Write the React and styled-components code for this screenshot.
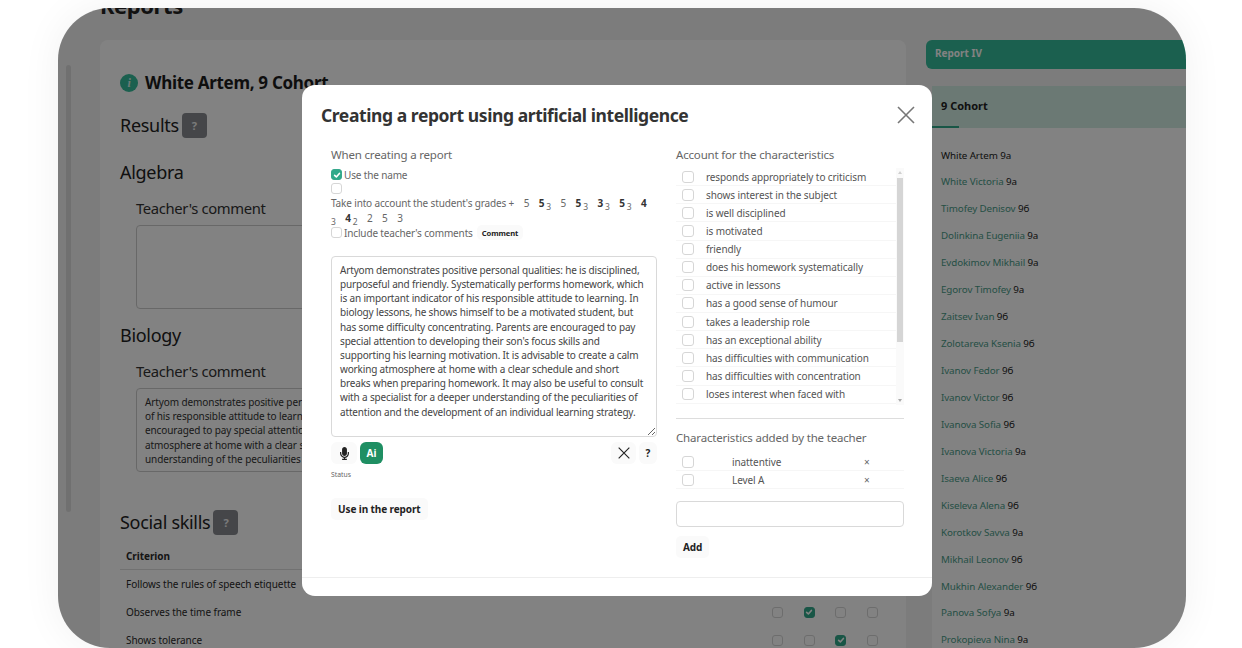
import React from "react";
import styled, { createGlobalStyle } from "styled-components";
import { FaMicrophone } from "react-icons/fa";

const GlobalStyle = createGlobalStyle`
  html, body {
    margin: 0;
    height: 648px;
    overflow: hidden;
    background: #fff;
    font-family: "Noto Sans", "Open Sans", sans-serif;
  }
  * { box-sizing: border-box; }
`;

const Screen = styled.div`
  width: 1242px;
  height: 648px;
  padding: 8px 56px 0 58px;
`;
const Frame = styled.div`
  position: relative;
  height: 640px;
  display: flex;
  overflow: hidden;
  border-radius: 52px;
  background: #f4f4f4;
  box-shadow: 0 0 40px rgba(0, 0, 0, 0.06);
`;
const Rail = styled.div`
  width: 17px;
  flex: none;
  padding: 57px 0 0 8px;
`;
const RailThumb = styled.div`
  width: 5px;
  height: 447px;
  border-radius: 3px;
  background: #dcdcdc;
`;
const Main = styled.main`
  width: 851px;
  flex: none;
  margin-top: -14px;
  padding-left: 25px;
`;
const PageTitle = styled.h1`
  margin: 0 0 23px;
  font-size: 22px;
  line-height: 23px;
  font-weight: 700;
  letter-spacing: -0.4px;
  color: #222;
`;
const Card = styled.section`
  width: 806px;
  height: 640px;
  padding: 30px 20px 0;
  background: #fff;
  border-radius: 8px;
`;
const NameRow = styled.div`
  display: flex;
  align-items: center;
  gap: 7px;
  font-size: 17px;
  line-height: 26px;
  font-weight: 700;
  letter-spacing: -0.3px;
  color: #1c1c1c;
`;
const InfoDot = styled.span`
  width: 18px;
  height: 18px;
  border-radius: 50%;
  background: #36bc9b;
  color: #d8f0ea;
  font: italic 700 12px/18px "Liberation Serif", serif;
  text-align: center;
`;
const SectionTitle = styled.h2`
  display: flex;
  align-items: center;
  gap: 3px;
  margin: ${p => p.$top}px 0 0;
  font-size: 18px;
  line-height: 26px;
  font-weight: 400;
  letter-spacing: -0.3px;
  color: #222;
`;
const HelpBadge = styled.span`
  width: 25px;
  height: 25px;
  border-radius: 4px;
  background: #878a90;
  color: #f0f0f0;
  font-size: 11px;
  line-height: 25px;
  font-weight: 700;
  text-align: center;
`;
const SubjectBlock = styled.div`
  margin-left: 16px;
`;
const CommentLabel = styled.div`
  margin-top: ${p => p.$top}px;
  font-size: 14.8px;
  line-height: 22px;
  letter-spacing: -0.35px;
  color: #333;
`;
const CommentBox = styled.div`
  width: 754px;
  height: ${p => p.$height}px;
  margin-top: 6px;
  padding: 6px 8px;
  border: 1px solid #ccc;
  border-radius: 4px;
  font-size: 10px;
  line-height: 14.2px;
  letter-spacing: -0.1px;
  white-space: pre;
  overflow: hidden;
  color: #333;
`;
const Table = styled.div`
  margin: 7px -2px 0 0;
`;
const TableRow = styled.div`
  display: grid;
  grid-template-columns: 1fr repeat(4, 31.6px);
  align-items: center;
  height: ${p => (p.$head ? 28 : 28)}px;
  padding-left: 6px;
  font-size: 10px;
  letter-spacing: -0.05px;
  color: #2a2a2a;
  font-weight: ${p => (p.$head ? 700 : 400)};
  border-bottom: ${p => (p.$head ? "1px solid #ddd" : "none")};
  & > span:not(:first-child) {
    justify-self: center;
  }
`;
const Box = styled.span`
  display: inline-flex;
  align-items: center;
  justify-content: center;
  flex: none;
  width: ${p => p.$size || 11}px;
  height: ${p => p.$size || 11}px;
  border-radius: 3px;
  border: 1px solid ${p => (p.$on ? "#36a88c" : "#d6d6d6")};
  background: ${p => (p.$on ? "#2fa98a" : "#fff")};
`;

const Side = styled.aside`
  flex: 1;
  padding-top: 32px;
`;
const ReportBar = styled.div`
  height: 29px;
  padding-left: 9px;
  background: #36bc9b;
  border-radius: 6px 0 0 6px;
  color: #fff;
  font-size: 10px;
  line-height: 27px;
  font-weight: 700;
`;
const ListPanel = styled.div`
  margin: 17px 0 0 6px;
  background: #fff;
  height: 600px;
`;
const CohortTab = styled.div`
  position: relative;
  height: 42px;
  padding-left: 9px;
  background: #d3ede4;
  color: #222;
  font-size: 11px;
  line-height: 40px;
  font-weight: 700;
  &::after {
    content: "";
    position: absolute;
    left: 0;
    bottom: 0;
    width: 27px;
    height: 2px;
    background: #2fa98a;
  }
`;
const StudentList = styled.ul`
  list-style: none;
  margin: 0;
  padding: 14.5px 0 0 9px;
`;
const Student = styled.li`
  height: 26.95px;
  font-size: 9.8px;
  line-height: 26.95px;
  letter-spacing: -0.1px;
  color: #222;
`;
const StudentName = styled.span`
  color: ${p => (p.$current ? "#222" : "#4a9c88")};
`;

const Overlay = styled.div`
  position: absolute;
  inset: 0;
  padding: 77px 0 0 244px;
  background: rgba(0, 0, 0, 0.49);
`;
const Modal = styled.div`
  width: 630px;
  height: 511px;
  display: flex;
  flex-direction: column;
  background: #fff;
  border-radius: 13px;
  color: #555;
`;
const ModalHead = styled.header`
  display: flex;
  align-items: flex-start;
  justify-content: space-between;
  height: 58px;
  padding: 17px 16px 0 19px;
`;
const ModalTitle = styled.h3`
  margin: 0;
  font-size: 17.5px;
  line-height: 27px;
  font-weight: 700;
  letter-spacing: -0.42px;
  color: #333;
`;
const CloseButton = styled.button`
  width: 20px;
  height: 28px;
  padding: 0;
  border: none;
  background: none;
  color: #777;
`;
const ModalBody = styled.div`
  flex: 1;
  display: grid;
  grid-template-columns: 326px 228px;
  column-gap: 19px;
  padding: 0 0 0 29px;
  border-bottom: 1px solid #eee;
`;
const Column = styled.div`
  display: flex;
  flex-direction: column;
`;
const GroupLabel = styled.div`
  font-size: 11.5px;
  line-height: 16px;
  letter-spacing: -0.18px;
  margin-top: ${p => p.$top || 4}px;
  color: #666;
`;
const OptionRow = styled.label`
  display: flex;
  align-items: ${p => (p.$boxOnly ? "flex-start" : "center")};
  gap: 2px;
  height: ${p => p.$h}px;
  margin-top: ${p => p.$top || 0}px;
  font-size: 10px;
  letter-spacing: -0.15px;
  color: #666;
`;
const GradesLine = styled.div`
  font-size: 10px;
  line-height: 15px;
  letter-spacing: -0.15px;
  color: #666;
`;
const Grade = styled.span`
  margin-left: 9.5px;
  font-weight: ${p => (p.$bold ? 700 : 400)};
  color: ${p => (p.$bold ? "#333" : "#666")};
  sub {
    font-weight: 400;
    font-size: 8.5px;
    line-height: 0;
    color: #666;
    margin-left: 2px;
  }
`;
const SoftButton = styled.button`
  padding: 0 7px;
  height: 22px;
  border: none;
  border-radius: 5px;
  background: #fafafa;
  font-family: inherit;
  font-size: 10px;
  letter-spacing: -0.1px;
  font-weight: 700;
  color: #222;
`;
const TinyButton = styled(SoftButton)`
  height: 15px;
  padding: 0 5px;
  margin-left: 2px;
  font-size: 7.6px;
`;
const ReportText = styled.textarea`
  display: block;
  width: 326px;
  height: 181px;
  margin-top: 17px;
  padding: 6px 9px 6px 8px;
  border: 1px solid #d9d9d9;
  border-radius: 4px;
  font-family: inherit;
  font-size: 10px;
  letter-spacing: -0.16px;
  line-height: 14.15px;
  color: #444;
  resize: vertical;
  overflow: hidden;
  outline: none;
`;
const ToolRow = styled.div`
  display: flex;
  align-items: center;
  gap: 3px;
  margin-top: 5px;
  height: 22px;
`;
const IconButton = styled.button`
  display: inline-flex;
  align-items: center;
  justify-content: center;
  width: ${p => p.$w}px;
  height: 22px;
  padding: 0;
  border: none;
  border-radius: 6px;
  background: ${p => (p.$primary ? "#1f8f63" : "#fafafa")};
  color: ${p => (p.$primary ? "#fff" : "#222")};
  font-family: inherit;
  font-size: 10px;
  font-weight: 700;
`;
const Spacer = styled.span`
  flex: 1;
`;
const Status = styled.div`
  margin-top: 5px;
  font-size: 6.8px;
  line-height: 12px;
  color: #666;
`;
const UseButton = styled(SoftButton)`
  align-self: flex-start;
  margin-top: 17px;
`;
const TraitScroller = styled.div`
  display: flex;
  height: 237px;
  margin-top: 5px;
`;
const TraitList = styled.div`
  flex: 1;
  min-width: 0;
  overflow: hidden;
`;
const TraitRow = styled.label`
  display: grid;
  grid-template-columns: ${p => p.$cols || "24px 1fr"};
  align-items: center;
  height: 18.13px;
  padding-left: 6px;
  font-size: 10px;
  letter-spacing: -0.1px;
  color: #555;
  border-bottom: 1px solid #f6f6f6;
`;
const ScrollTrack = styled.div`
  position: relative;
  width: 8px;
  padding: 10px 1px 63px;
  background: #fafafa;
  &::before,
  &::after {
    content: "";
    position: absolute;
    left: 2px;
    border-left: 2px solid transparent;
    border-right: 2px solid transparent;
  }
  &::before {
    top: 3px;
    border-bottom: 3px solid #d0d0d0;
  }
  &::after {
    bottom: 3px;
    border-top: 3px solid #aaa;
  }
`;
const ScrollThumb = styled.div`
  height: 164px;
  background: #d5d5d5;
`;
const Divider = styled.hr`
  width: 100%;
  margin: 13px 0 0;
  border: none;
  border-top: 1px solid #ddd;
`;
const RemoveMark = styled.span`
  font-size: 10px;
  color: #666;
`;
const TeacherRows = styled.div`
  margin-top: 7px;
`;
const AddInput = styled.input`
  width: 228px;
  height: 26px;
  margin-top: 12px;
  border: 1px solid #d9d9d9;
  border-radius: 4px;
  outline: none;
`;
const AddButton = styled(SoftButton)`
  align-self: flex-start;
  margin-top: 9px;
`;
const ModalFoot = styled.div`
  height: 18px;
`;

const students = [
  ["White Artem", "9a"], ["White Victoria", "9a"], ["Timofey Denisov", "9б"],
  ["Dolinkina Eugeniia", "9a"], ["Evdokimov Mikhail", "9a"], ["Egorov Timofey", "9a"],
  ["Zaitsev Ivan", "9б"], ["Zolotareva Ksenia", "9б"], ["Ivanov Fedor", "9б"],
  ["Ivanov Victor", "9б"], ["Ivanova Sofia", "9б"], ["Ivanova Victoria", "9a"],
  ["Isaeva Alice", "9б"], ["Kiseleva Alena", "9б"], ["Korotkov Savva", "9a"],
  ["Mikhail Leonov", "9б"], ["Mukhin Alexander", "9б"], ["Panova Sofya", "9a"],
  ["Prokopieva Nina", "9a"],
];

const traits = [
  "responds appropriately to criticism", "shows interest in the subject",
  "is well disciplined", "is motivated", "friendly",
  "does his homework systematically", "active in lessons",
  "has a good sense of humour", "takes a leadership role",
  "has an exceptional ability", "has difficulties with communication",
  "has difficulties with concentration", "loses interest when faced with",
];

const reportText =
  "Artyom demonstrates positive personal qualities: he is disciplined, purposeful and friendly. Systematically performs homework, which is an important indicator of his responsible attitude to learning. In biology lessons, he shows himself to be a motivated student, but has some difficulty concentrating. Parents are encouraged to pay special attention to developing their son's focus skills and supporting his learning motivation. It is advisable to create a calm working atmosphere at home with a clear schedule and short breaks when preparing homework. It may also be useful to consult with a specialist for a deeper understanding of the peculiarities of attention and the development of an individual learning strategy.";

const biologyComment = `Artyom demonstrates positive personal qualities: he is disciplined, purposeful and friendly. Systematically performs homework, which is an important indicator
of his responsible attitude to learning. In biology lessons, he shows himself to be a motivated student, but has some difficulty concentrating. Parents are
encouraged to pay special attention to developing their son's focus skills and supporting his learning motivation. It is advisable to create a calm working
atmosphere at home with a clear schedule and short breaks when preparing homework. It may also be useful to consult with a specialist for a deeper
understanding of the peculiarities of attention and the development of an individual learning strategy.`;

const skills = [
  ["Follows the rules of speech etiquette", 1],
  ["Observes the time frame", 1],
  ["Shows tolerance", 2],
];

const Check = () => (
  <svg width="8" height="8" viewBox="0 0 10 10" fill="none" stroke="#fff" strokeWidth="2" strokeLinecap="round" strokeLinejoin="round">
    <path d="M2 5.4 4.2 7.4 8 3" />
  </svg>
);

const Cross = ({ size, width }) => (
  <svg width={size} height={size} viewBox="0 0 18 18" stroke="currentColor" strokeWidth={width} fill="none">
    <path d="M1 1 17 17M17 1 1 17" />
  </svg>
);

const App = () => (
  <Screen>
    <GlobalStyle />
    <Frame>
      <Rail><RailThumb /></Rail>
      <Main>
        <PageTitle>Reports</PageTitle>
        <Card>
          <NameRow><InfoDot>i</InfoDot>White Artem, 9 Cohort</NameRow>
          <SectionTitle $top={16}>Results <HelpBadge>?</HelpBadge></SectionTitle>
          <SectionTitle $top={21}>Algebra</SectionTitle>
          <SubjectBlock>
            <CommentLabel $top={12}>Teacher's comment</CommentLabel>
            <CommentBox $height={84} />
          </SubjectBlock>
          <SectionTitle $top={13}>Biology</SectionTitle>
          <SubjectBlock>
            <CommentLabel $top={12}>Teacher's comment</CommentLabel>
            <CommentBox $height={84}>{biologyComment}</CommentBox>
          </SubjectBlock>
          <SectionTitle $top={37}>Social skills <HelpBadge>?</HelpBadge></SectionTitle>
          <Table>
            <TableRow $head><span>Criterion</span></TableRow>
            {skills.map(([name, on]) => (
              <TableRow key={name}>
                <span>{name}</span>
                {[0, 1, 2, 3].map(i => (
                  <Box key={i} $on={i === on}>{i === on && <Check />}</Box>
                ))}
              </TableRow>
            ))}
          </Table>
        </Card>
      </Main>
      <Side>
        <ReportBar>Report IV</ReportBar>
        <ListPanel>
          <CohortTab>9 Cohort</CohortTab>
          <StudentList>
            {students.map(([name, group], i) => (
              <Student key={name}>
                <StudentName $current={i === 0}>{name}</StudentName> {group}
              </Student>
            ))}
          </StudentList>
        </ListPanel>
      </Side>

      <Overlay>
        <Modal>
          <ModalHead>
            <ModalTitle>Creating a report using artificial intelligence</ModalTitle>
            <CloseButton aria-label="Close"><Cross size={18} width={1.6} /></CloseButton>
          </ModalHead>
          <ModalBody>
            <Column>
              <GroupLabel>When creating a report</GroupLabel>
              <OptionRow $h={17} $top={3}>
                <Box $on><Check /></Box>Use the name
              </OptionRow>
              <OptionRow $h={13} $boxOnly><Box /></OptionRow>
              <GradesLine>
                Take into account the student's grades +
                <Grade>5</Grade>
                <Grade $bold>5<sub>3</sub></Grade>
                <Grade>5</Grade>
                <Grade $bold>5<sub>3</sub></Grade>
                <Grade $bold>3<sub>3</sub></Grade>
                <Grade $bold>5<sub>3</sub></Grade>
                <Grade $bold>4<sub> 3</sub></Grade>
                <Grade $bold>4<sub>2</sub></Grade>
                <Grade>2</Grade>
                <Grade>5</Grade>
                <Grade>3</Grade>
              </GradesLine>
              <OptionRow $h={13}>
                <Box />Include teacher's comments<TinyButton>Comment</TinyButton>
              </OptionRow>
              <ReportText readOnly defaultValue={reportText} />
              <ToolRow>
                <IconButton $w={26}><FaMicrophone size={13} /></IconButton>
                <IconButton $primary $w={23}>Ai</IconButton>
                <Spacer />
                <IconButton $w={25}><Cross size={12} width={1.7} /></IconButton>
                <IconButton $w={18}>?</IconButton>
              </ToolRow>
              <Status>Status</Status>
              <UseButton>Use in the report</UseButton>
            </Column>
            <Column>
              <GroupLabel>Account for the characteristics</GroupLabel>
              <TraitScroller>
                <TraitList>
                  {traits.map(t => (
                    <TraitRow key={t}><Box $size={12} />{t}</TraitRow>
                  ))}
                </TraitList>
                <ScrollTrack><ScrollThumb /></ScrollTrack>
              </TraitScroller>
              <Divider />
              <GroupLabel $top={11}>Characteristics added by the teacher</GroupLabel>
              <TeacherRows>
                <TraitRow $cols="50px 1fr 40px"><Box $size={12} />inattentive<RemoveMark>×</RemoveMark></TraitRow>
                <TraitRow $cols="50px 1fr 40px"><Box $size={12} />Level A<RemoveMark>×</RemoveMark></TraitRow>
              </TeacherRows>
              <AddInput />
              <AddButton>Add</AddButton>
            </Column>
          </ModalBody>
          <ModalFoot />
        </Modal>
      </Overlay>
    </Frame>
  </Screen>
);

export default App;
